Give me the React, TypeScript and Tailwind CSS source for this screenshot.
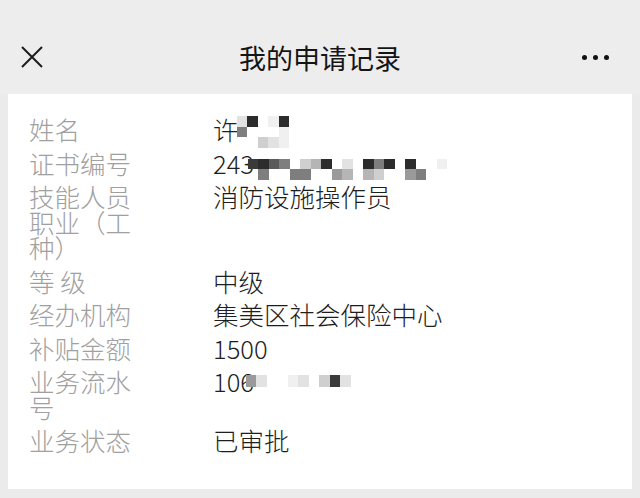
const FONT = "font-['Noto_Sans_CJK_SC','Noto_Sans',sans-serif]";

// mosaic colour codes -> tailwind classes
const SHADE: Record<string, string> = {
  '.': 'bg-transparent',
  a: 'bg-[#f0f0f0]',
  b: 'bg-[#e2e2e2]',
  c: 'bg-[#cfcfcf]',
  d: 'bg-[#b5b5b5]',
  e: 'bg-[#9a9a9a]',
  f: 'bg-[#7e7e7e]',
  g: 'bg-[#5a5a5a]',
  h: 'bg-[#3a3a3a]',
  k: 'bg-[#2c2c2c]',
};

function Mosaic({ rows, cell = 'w-[10.5px] h-[10.5px]' }: { rows: string[]; cell?: string }) {
  return (
    <div className="relative z-10 flex flex-col">
      {rows.map((r, i) => (
        <div key={i} className="flex">
          {r.split('').map((ch, j) => (
            <span key={j} className={`${cell} ${SHADE[ch]}`} />
          ))}
        </div>
      ))}
    </div>
  );
}

type Row = { label: string; value: React.ReactNode };

const rows: Row[] = [
  {
    label: '姓名',
    value: (
      <div className="flex h-[25.5px] items-start">
        <span>许</span>
        <div className="-ml-[2px]">
          <Mosaic rows={['bk.ak', 'f...a', '..cba']} />
        </div>
      </div>
    ),
  },
  {
    label: '证书编号',
    value: (
      <div className="flex h-[25.5px] items-start">
        <span>243</span>
        <div className="-ml-[6px] mt-[9px]">
          <Mosaic rows={['hkgf.cdk.b.kfk.k..a', '.f..ff..ed.dc..ef..']} />
        </div>
      </div>
    ),
  },
  { label: '技能人员职业（工种）', value: '消防设施操作员' },
  { label: '等 级', value: '中级' },
  { label: '经办机构', value: '集美区社会保险中心' },
  { label: '补贴金额', value: '1500' },
  {
    label: '业务流水号',
    value: (
      <div className="flex h-[25.5px] items-start">
        <span>106</span>
        <div className="-ml-[8px] mt-[7px]">
          <Mosaic rows={['eb..ab.chb']} cell="w-[10.5px] h-[12px]" />
        </div>
      </div>
    ),
  },
  { label: '业务状态', value: '已审批' },
];

export default function App() {
  return (
    <div className={`min-h-[498px] w-[640px] bg-[#ebebeb] ${FONT}`}>
      {/* Header */}
      <div className="h-[94px] bg-[#ededed] pt-[38px]">
        <div className="grid h-[38px] grid-cols-[1fr_auto_1fr] items-center px-[21px]">
          <svg width="22" height="22" viewBox="0 0 22 22" className="text-[#1c1c1c]">
            <path d="M1 1L21 21M21 1L1 21" stroke="currentColor" strokeWidth="2" />
          </svg>
          <h1 className="text-[27px] leading-none text-[#151515]">我的申请记录</h1>
          <div className="mr-[10px] flex items-center justify-end gap-[6px]">
            <span className="h-[5px] w-[5px] rounded-full bg-[#111]" />
            <span className="h-[5px] w-[5px] rounded-full bg-[#111]" />
            <span className="h-[5px] w-[5px] rounded-full bg-[#111]" />
          </div>
        </div>
      </div>

      {/* Card */}
      <div className="mx-[8px] h-[395px] bg-white pl-[21px] pt-[22px]">
        {rows.map((r) => (
          <div
            key={r.label}
            className="mb-[8px] grid grid-cols-[184px_1fr] text-[25.5px] font-light leading-[25.5px]"
          >
            <div className="w-[104px] break-all text-[#a0a0a0]">{r.label}</div>
            <div className="text-[#1e1e1e]">{r.value}</div>
          </div>
        ))}
      </div>
    </div>
  );
}
